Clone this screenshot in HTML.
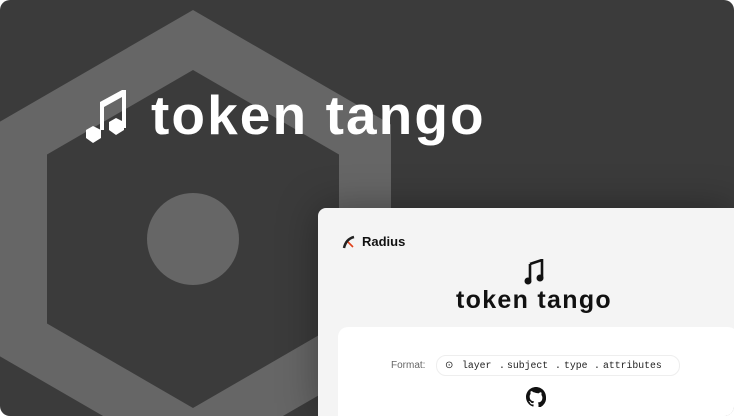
<!DOCTYPE html>
<html><head><style>
html,body{margin:0;padding:0;background:#fff;overflow:hidden;width:734px;height:416px;}
.wrap{position:relative;width:734px;height:416px;overflow:hidden;background:#3b3b3b;border-radius:10px;font-family:"Liberation Sans",sans-serif;}
.title{position:absolute;left:151px;top:83px;font-size:55px;font-weight:bold;color:#fff;letter-spacing:2.1px;}
.card{position:absolute;left:318px;top:208px;width:416px;height:208px;background:#f4f4f4;border-radius:8px 0 0 0;box-shadow:0 0 40px rgba(0,0,0,0.35);overflow:hidden;}
.radius{position:absolute;left:24px;top:26px;font-size:13px;font-weight:bold;color:#111;}
.ct{position:absolute;left:0;width:432px;text-align:center;top:78px;font-size:25px;font-weight:bold;color:#111;letter-spacing:1.3px;}
.panel{position:absolute;left:20px;top:119px;width:400px;height:120px;background:#fff;border-radius:10px;}
.fmt{position:absolute;left:53px;top:33px;font-size:10px;color:#666;}
.pill{position:absolute;left:98px;top:28px;width:242px;height:19px;border:1px solid #eee;border-radius:10px;font-family:"Liberation Mono",monospace;font-size:9.8px;color:#222;line-height:19px;}
.pill span{position:absolute;top:0;}
</style></head><body>
<div class="wrap">
<svg width="734" height="416" style="position:absolute;left:0;top:0">
<polygon points="193,10 391,124.5 391,353.5 193,468 -5,353.5 -5,124.5" fill="#666"/>
<polygon points="193,70 339,154.5 339,323.5 193,408 47,323.5 47,154.5" fill="#3b3b3b"/>
<circle cx="193" cy="239" r="46" fill="#666"/>
<g fill="#fff">
<polygon points="100,102 122,90 126,90 126,128 122,128 122,97 104,107 104,130 100,130"/>
<polygon points="93,126 101,130 101,138 93,143 86,138 86,130"/>
<polygon points="116,118 124,122 124,130 116,135 109,130 109,122"/>
</g>
</svg>
<div class="title">token tango</div>
<div class="card">
<svg width="14" height="14" style="position:absolute;left:24px;top:27px" viewBox="0 0 14 14"><path d="M2 13 Q4 4 12 2" stroke="#222" stroke-width="2.5" fill="none"/><path d="M6 7 L11 12" stroke="#e0401a" stroke-width="1.6"/></svg>
<div class="radius" style="left:44px">Radius</div>
<svg width="22" height="26" style="position:absolute;left:206px;top:51px" viewBox="0 0 22 26"><path d="M6 5 L18 1 L18 19 M6 5 L6 21" stroke="#111" stroke-width="2.6" fill="none"/><circle cx="4" cy="22" r="3.5" fill="#111"/><circle cx="16" cy="19" r="3.5" fill="#111"/></svg>
<div class="ct">token tango</div>
<div class="panel">
<div class="fmt">Format:</div>
<div class="pill">
<span style="left:8px;font-family:'Liberation Sans',sans-serif">⊙</span>
<span style="left:25px">layer</span><span style="left:62px">.</span>
<span style="left:70px">subject</span><span style="left:118px">.</span>
<span style="left:127px">type</span><span style="left:157px">.</span>
<span style="left:166px">attributes</span>
</div>
<svg width="20" height="20" style="position:absolute;left:188px;top:60px" viewBox="0 0 16 16"><path fill="#111" d="M8 0C3.58 0 0 3.58 0 8c0 3.54 2.29 6.53 5.47 7.59.4.07.55-.17.55-.38v-1.33c-2.23.48-2.7-1.07-2.7-1.07-.36-.92-.89-1.17-.89-1.17-.73-.5.06-.49.06-.49.8.06 1.23.83 1.23.83.71 1.22 1.87.87 2.33.66.07-.52.28-.87.51-1.07-1.78-.2-3.64-.89-3.64-3.95 0-.87.31-1.59.82-2.15-.08-.2-.36-1.02.08-2.12 0 0 .67-.21 2.2.82A7.6 7.6 0 0 1 8 4.8c.68 0 1.36.09 2 .27 1.53-1.04 2.2-.82 2.2-.82.44 1.1.16 1.92.08 2.12.51.56.82 1.27.82 2.15 0 3.07-1.87 3.75-3.65 3.95.29.25.54.73.54 1.48v2.2c0 .21.15.46.55.38A8 8 0 0 0 16 8c0-4.42-3.58-8-8-8z"/></svg>
</div>
</div>
</div>
</body></html>
